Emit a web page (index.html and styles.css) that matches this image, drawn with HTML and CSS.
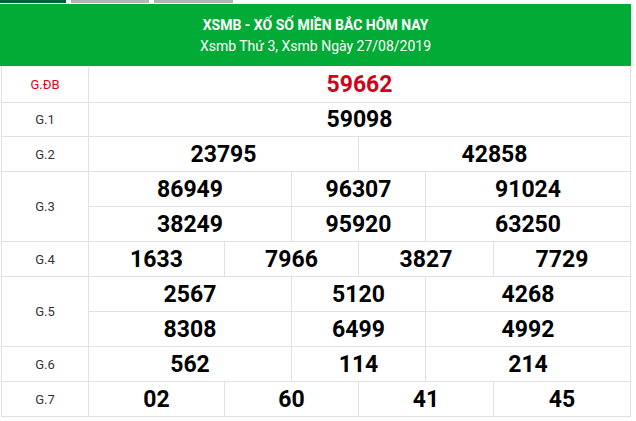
FILE: index.html
```html
<!DOCTYPE html>
<html lang="vi">
<head>
<meta charset="utf-8">
<title>XSMB</title>
<link rel="stylesheet" href="styles.css">
</head>
<body>
<div class="tabs">
  <span class="tab tab-active"></span>
  <span class="tab tab-2"></span>
  <span class="tab tab-3"></span>
</div>
<div class="header">
  <h1 class="title">XSMB - XỐ SỐ MIỀN BẮC HÔM NAY</h1>
  <p class="subtitle">Xsmb Thứ 3, Xsmb Ngày 27/08/2019</p>
</div>
<div class="results">
  <div class="label label-db">G.ĐB</div>
  <div class="num num-db s6">59662</div>

  <div class="label">G.1</div>
  <div class="num s6">59098</div>

  <div class="label">G.2</div>
  <div class="num s3">23795</div>
  <div class="num s3">42858</div>

  <div class="label r2">G.3</div>
  <div class="num s2">86949</div>
  <div class="num s2">96307</div>
  <div class="num s2">91024</div>
  <div class="num s2">38249</div>
  <div class="num s2">95920</div>
  <div class="num s2">63250</div>

  <div class="label">G.4</div>
  <div class="num">1633</div>
  <div class="num s2">7966</div>
  <div class="num s2">3827</div>
  <div class="num">7729</div>

  <div class="label r2">G.5</div>
  <div class="num s2">2567</div>
  <div class="num s2">5120</div>
  <div class="num s2">4268</div>
  <div class="num s2">8308</div>
  <div class="num s2">6499</div>
  <div class="num s2">4992</div>

  <div class="label">G.6</div>
  <div class="num s2">562</div>
  <div class="num s2">114</div>
  <div class="num s2">214</div>

  <div class="label">G.7</div>
  <div class="num">02</div>
  <div class="num s2">60</div>
  <div class="num s2">41</div>
  <div class="num">45</div>
</div>
</body>
</html>
```

FILE: styles.css
```css
html, body {
  margin: 0;
  padding: 0;
  background: #fff;
}

body {
  font-family: Roboto, "Liberation Sans", Arial, sans-serif;
  width: 636px;
}

.tabs {
  display: flex;
  gap: 5px;
  height: 3px;
  margin-bottom: 1px;
}

.tab {
  display: block;
  height: 3px;
  background: #b4b4b4;
}

.tab-active {
  width: 66px;
  background: #00603a;
}

.tab-2 {
  width: 78px;
}

.tab-3 {
  width: 79px;
}

.header {
  width: 631px;
  height: 62px;
  background: #02ab35;
  color: #fff;
  text-align: center;
  box-sizing: border-box;
  padding-top: 12px;
}

.title {
  margin: 0;
  font-size: 14px;
  font-weight: 700;
  line-height: 18px;
}

.subtitle {
  margin: 3px 0 0;
  font-size: 14px;
  font-weight: 400;
  line-height: 18px;
}

.results {
  display: grid;
  grid-template-columns: 87px 136px 67px 67px 67px 68px 137px;
  grid-auto-rows: 35px;
  width: 630px;
  margin-left: 1px;
  border-left: 1px solid #e1e1e1;
  border-top: 1px solid #fff;
  box-sizing: border-box;
}

.label,
.num {
  display: flex;
  align-items: center;
  justify-content: center;
  border-right: 1px solid #e1e1e1;
  border-bottom: 1px solid #e1e1e1;
}

.results > .label:first-child,
.results > .label:first-child + .num {
  height: 35px;
}

.label {
  font-size: 13px;
  color: #333;
}

.label-db {
  color: #e3001b;
}

.num {
  font-size: 23px;
  font-weight: 700;
  color: #000;
}

.num-db {
  color: #d0021b;
}

.s2 { grid-column: span 2; }
.s3 { grid-column: span 3; }
.s6 { grid-column: span 6; }
.r2 { grid-row: span 2; }
```
